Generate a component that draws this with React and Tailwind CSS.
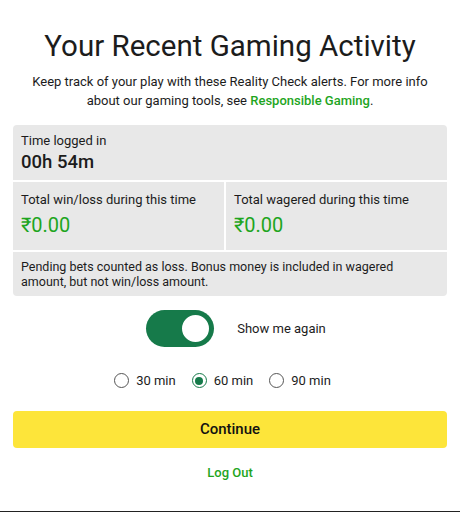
export default function App() {
  const options = ["30 min", "60 min", "90 min"];

  return (
    <div className="w-[460px] h-[512px] bg-white border-b border-[#222] font-['Roboto',sans-serif] text-[#1c1c1c] overflow-hidden">
      <div className="px-[13px] pt-[27px]">
        <h1 className="text-center text-[29.5px] leading-[38px] font-normal">Your Recent Gaming Activity</h1>
        <p className="mt-[7px] text-center text-[13px] leading-[19px] px-[16px]">
          Keep track of your play with these Reality Check alerts. For more info about our gaming tools, see{" "}
          <span className="text-[#1ea51e] font-medium">Responsible Gaming</span>.
        </p>

        <div className="mt-[15px] rounded-[4px] overflow-hidden flex flex-col gap-[2px]">
          <div className="bg-[#e8e8e8] h-[55px] px-[8px] pt-[8px]">
            <div className="text-[13px] leading-[16px]">Time logged in</div>
            <div className="text-[18.5px] leading-[26px] font-medium">00h 54m</div>
          </div>
          <div className="grid grid-cols-[211px_1fr] gap-[2px]">
            <div className="bg-[#e8e8e8] h-[68px] px-[8px] pt-[10px]">
              <div className="text-[13px] leading-[16px]">Total win/loss during this time</div>
              <div className="mt-[5px] text-[20px] leading-[24px] text-[#1ea51e]">₹0.00</div>
            </div>
            <div className="bg-[#e8e8e8] h-[68px] px-[8px] pt-[10px]">
              <div className="text-[13px] leading-[16px]">Total wagered during this time</div>
              <div className="mt-[5px] text-[20px] leading-[24px] text-[#1ea51e]">₹0.00</div>
            </div>
          </div>
          <div className="bg-[#e8e8e8] h-[44px] px-[8px] pt-[7px] text-[12.5px] leading-[15px]">
            Pending bets counted as loss. Bonus money is included in wagered amount, but not win/loss amount.
          </div>
        </div>

        <div className="mt-[14px] flex items-center justify-center gap-[23px] pl-[12px]">
          <div className="w-[68px] h-[37px] rounded-full bg-[#167a4a] flex items-center justify-end pr-[3px]">
            <div className="w-[31px] h-[31px] rounded-full bg-white border-[2px] border-[#167a4a]"></div>
          </div>
          <span className="text-[13px]">Show me again</span>
        </div>

        <div className="mt-[24px] flex items-center justify-center gap-[16px] pr-[15px]">
          {options.map((o) => (
            <label key={o} className="flex items-center gap-[7px] text-[13px]">
              {o === "60 min" ? (
                <span className="w-[15px] h-[15px] rounded-full border border-[#167a4a] flex items-center justify-center">
                  <span className="w-[8px] h-[8px] rounded-full bg-[#167a4a]"></span>
                </span>
              ) : (
                <span className="w-[15px] h-[15px] rounded-full border border-[#555]"></span>
              )}
              {o}
            </label>
          ))}
        </div>

        <button className="mt-[20px] w-full h-[37px] rounded-[4px] bg-[#fde53a] text-[15px] font-medium text-[#111]">
          Continue
        </button>

        <div className="mt-[15px] text-center text-[13px] font-medium text-[#1ea51e]">Log Out</div>
      </div>
    </div>
  );
}
